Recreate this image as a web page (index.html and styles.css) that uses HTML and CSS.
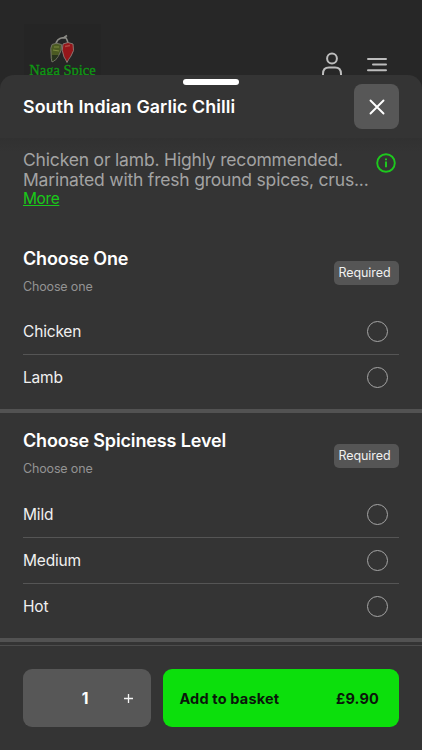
FILE: index.html
```html
<!DOCTYPE html>
<html lang="en">
<head>
	<meta charset="utf-8">
	<title>Naga Spice</title>
	<link rel="stylesheet" href="styles.css">
</head>
<body>
	<header class="site-header">
		<div class="logo">
			<svg class="chillies" width="26" height="30" viewBox="0 0 26 30">
				<path d="M6 11C6 6 9 4 14 3.5L17 1.5M11 4L16 4C17 6 18 7 18 10" fill="none" stroke="#8c8c86" stroke-width="1.6"/>
				<path d="M2 10.5Q6 8 11.5 10.5Q12 17 9 21Q6 27 2 28Q1 25 1 19Q0 14 2 10.5Z" fill="#4b5a22" stroke="#77776f" stroke-width=".9"/>
				<path d="M2 21L8.5 21Q6 26 2.4 27.2Z" fill="#27331d"/>
				<path d="M4 13L9 13M3 16L9 17" stroke="#7c8a3e"/>
				<path d="M13 10Q18 7 23 10Q25 17 21 22Q18 26 17 28.5Q16 26 14 23Q11 16 13 10Z" fill="#96161a" stroke="#88807a" stroke-width=".9"/>
				<path d="M15 12.5L20 11.5" stroke="#b04a42" stroke-width="1.5"/>
			</svg>
			<span class="logo-name">Naga Spice</span>
		</div>
		<div class="nav">
			<svg width="24" height="26" viewBox="0 0 24 26" fill="none" stroke="#bdbdbd" stroke-width="2">
				<circle cx="12" cy="6.5" r="4.9"/>
				<path d="M3 24V22Q3 15.6 9 15.6H15Q21 15.6 21 22V24"/>
			</svg>
			<svg width="22" height="16" viewBox="0 0 22 16" stroke="#bdbdbd" stroke-width="2" stroke-linecap="round">
				<path d="M2 2H20M7 7.6H20M2 13.2H20"/>
			</svg>
		</div>
	</header>

	<main class="sheet">
		<div class="sheet-top">
			<span class="handle"></span>
			<h1 class="dish">South Indian Garlic Chilli</h1>
			<button class="close" aria-label="Close">
				<svg width="16" height="16" viewBox="0 0 16 16" stroke="#fff" stroke-width="1.9" stroke-linecap="round">
					<path d="M1.5 1.5L14.5 14.5M14.5 1.5L1.5 14.5"/>
				</svg>
			</button>
		</div>

		<div class="about">
			<div class="about-text">
				<p class="about-line">Chicken or lamb. Highly recommended.</p>
				<p class="about-line line-two">Marinated with fresh ground spices, crus...</p>
				<a class="more" href="#">More</a>
			</div>
			<svg class="info" width="20" height="20" viewBox="0 0 20 20" fill="none" stroke="#1dc81d" stroke-width="2">
				<circle cx="10" cy="10" r="8.8" stroke-width="1.9"/>
				<path d="M10 8.6V14.3M10 5.4V7.2"/>
			</svg>
		</div>

		<section class="group">
			<div class="group-head">
				<div>
					<h2 class="group-title">Choose One</h2>
					<p class="hint">Choose one</p>
				</div>
				<span class="required">Required</span>
			</div>
			<ul class="options">
				<li class="option">Chicken<span class="radio"></span></li>
				<li class="option">Lamb<span class="radio"></span></li>
			</ul>
		</section>

		<section class="group">
			<div class="group-head">
				<div>
					<h2 class="group-title">Choose Spiciness Level</h2>
					<p class="hint">Choose one</p>
				</div>
				<span class="required">Required</span>
			</div>
			<ul class="options">
				<li class="option">Mild<span class="radio"></span></li>
				<li class="option">Medium<span class="radio"></span></li>
				<li class="option">Hot<span class="radio"></span></li>
			</ul>
		</section>

		<footer class="basket">
			<div class="quantity">
				<span></span>
				<span class="count">1</span>
				<svg class="plus" width="9" height="9" viewBox="0 0 9 9" stroke="#f4f4f4" stroke-width="1.3">
					<path d="M0 4.5H9M4.5 0V9"/>
				</svg>
			</div>
			<button class="add">
				<span class="add-label">Add to basket</span>
				<span class="price">£9.90</span>
			</button>
		</footer>
	</main>
</body>
</html>
```

FILE: styles.css
```css
*{
	box-sizing: border-box;
}
body{
	margin: 0;
	height: 750px;
	overflow: hidden;
	background-color: #272727;
	color: #f0f0f0;
	font-family: Inter, "Liberation Sans", sans-serif;
}
h1, h2, p, ul{
	margin: 0;
	padding: 0;
}
button{
	border: 0;
	padding: 0;
	font-family: inherit;
}
svg{
	display: block;
	flex-shrink: 0;
}

/* page behind the sheet */
.site-header{
	display: flex;
	justify-content: space-between;
	height: 75px;
	padding: 24px 34px 0 24px;
}
.logo{
	display: flex;
	flex-direction: column;
	align-items: center;
	width: 77px;
	height: 51px;
	padding-top: 10px;
	background-color: #252525;
}
.logo-name{
	margin-top: -2px;
	color: #0f9813;
	font-family: "Liberation Serif", serif;
	font-size: 14.5px;
	line-height: 16px;
	white-space: nowrap;
	-webkit-text-stroke: .3px #0f9813;
}
.nav{
	display: flex;
	gap: 22px;
	padding-top: 28px;
}
.nav svg + svg{
	margin-top: 5px;
}

/* sheet */
.sheet{
	position: relative;
	display: flex;
	flex-direction: column;
	height: 675px;
	border-radius: 14px 14px 0 0;
	background-color: #343434;
}
.sheet-top{
	position: relative;
	display: flex;
	align-items: center;
	justify-content: space-between;
	height: 63px;
	padding: 0 23px;
}
.handle{
	position: absolute;
	top: 4px;
	left: 183px;
	width: 56px;
	height: 6px;
	border-radius: 3px;
	background-color: #fff;
}
.dish{
	color: #fff;
	font-size: 17.8px;
	font-weight: 600;
	line-height: 24px;
	letter-spacing: .1px;
}
.close{
	display: flex;
	align-items: center;
	justify-content: center;
	width: 45px;
	height: 45px;
	border-radius: 8px;
	background-color: #575757;
}
.about{
	display: flex;
	justify-content: space-between;
	height: 92.5px;
	padding: 12px 26px 0 23px;
	background: linear-gradient(#313131, #343434 14px);
}
.about-line{
	color: #a3a3a3;
	font-size: 17.5px;
	line-height: 20px;
	letter-spacing: -.18px;
	white-space: nowrap;
}
.line-two{
	letter-spacing: -.2px;
}
.more{
	display: block;
	color: #19ca19;
	font-size: 15.5px;
	line-height: 18px;
	letter-spacing: -.4px;
}
.info{
	margin-top: 3px;
}

/* option groups */
.group{
	padding: 0 23px 8px;
	border-bottom: 4px solid #525252;
}
.group-head{
	display: flex;
	justify-content: space-between;
	height: 78.5px;
	padding-top: 16px;
}
.group-title{
	color: #fff;
	font-size: 18px;
	font-weight: 600;
	line-height: 24px;
	letter-spacing: -.14px;
}
.hint{
	margin-top: 8px;
	color: #939393;
	font-size: 12.5px;
	line-height: 16px;
	letter-spacing: -.15px;
}
.required{
	width: 65px;
	height: 24px;
	margin-top: 14.5px;
	padding-right: 4px;
	border-radius: 5px;
	background-color: #555;
	font-size: 12.5px;
	line-height: 24px;
	letter-spacing: -.08px;
	text-align: center;
}
.options{
	list-style: none;
}
.option{
	display: flex;
	align-items: center;
	justify-content: space-between;
	height: 46px;
	padding-right: 11px;
	border-bottom: 1px solid #555;
	font-size: 15.5px;
	letter-spacing: -.18px;
}
.option:last-child{
	border-bottom-color: transparent;
}
.radio{
	width: 21px;
	height: 21px;
	border: 1px solid #a5a5a5;
	border-radius: 50%;
}

/* bottom bar */
.basket{
	display: flex;
	gap: 12px;
	margin-top: auto;
	height: 105px;
	padding: 23px 23px 0;
	border-top: 1px solid #4c4c4c;
}
.quantity{
	display: grid;
	grid-template-columns: 42px 40px 46px;
	align-items: center;
	justify-items: center;
	width: 128.4px;
	height: 58px;
	border-radius: 9px;
	background-color: #575757;
}
.count{
	color: #fff;
	font-size: 15.5px;
	font-weight: 700;
}
.add{
	display: flex;
	align-items: center;
	justify-content: space-between;
	flex: 1;
	height: 58px;
	padding: 1px 20px 0 16px;
	border-radius: 9px;
	background-color: #0cdf0c;
	color: #0a160a;
	font-size: 14.5px;
	font-weight: 700;
	letter-spacing: .18px;
}
```
